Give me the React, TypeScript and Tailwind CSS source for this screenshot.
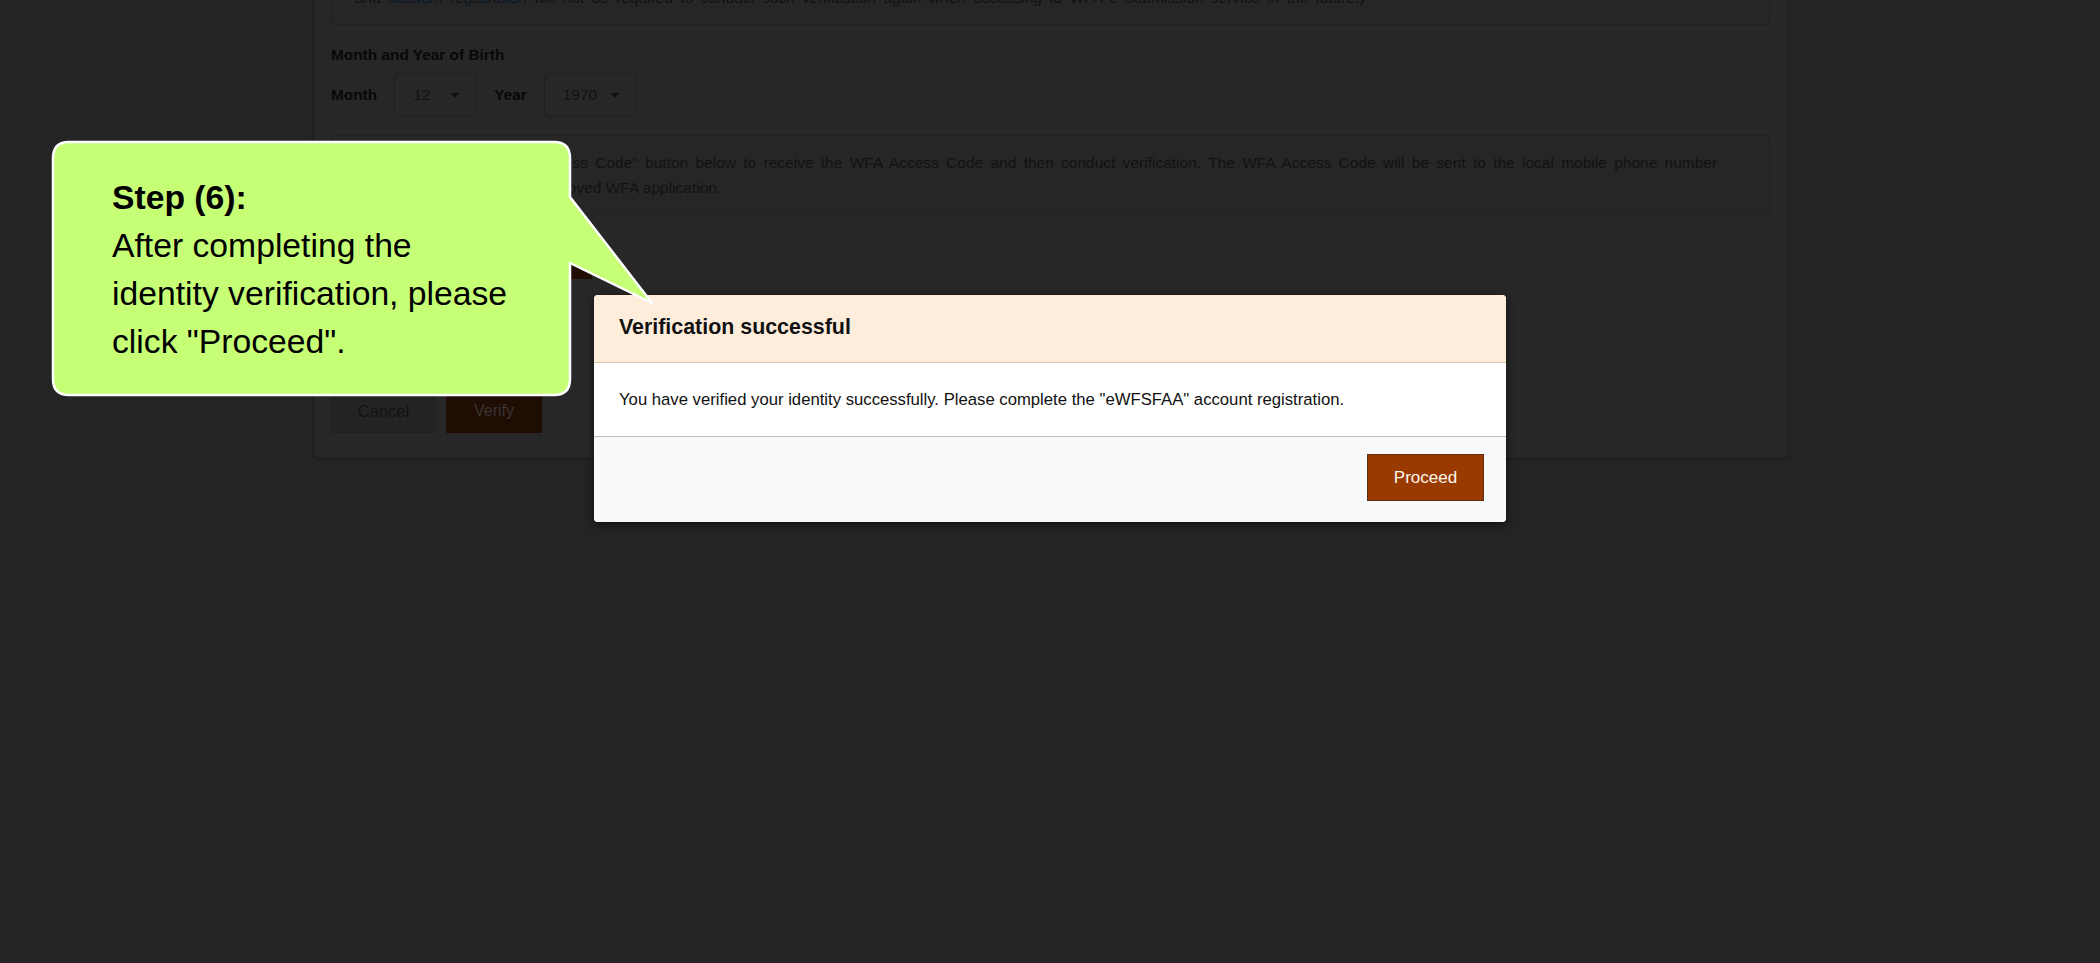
import React from "react";

function Caret() {
  return (
    <span className="inline-block h-0 w-0 border-x-[4px] border-t-[5px] border-x-transparent border-t-[#101010]" />
  );
}

function Select({ value, width }: { value: string; width: string }) {
  return (
    <div
      className={`${width} ml-[17px] flex h-[44px] items-center justify-between rounded-[4px] border border-[#1f1f1f] bg-[#272727] pl-[18px] pr-[17px] text-[15.5px] text-[#121212]`}
    >
      <span>{value}</span>
      <Caret />
    </div>
  );
}

export default function App() {
  return (
    <div className="relative h-[963px] w-[2100px] overflow-hidden bg-[#242424] font-['Liberation_Sans',Arial,sans-serif]">
      {/* dimmed page behind the dialog */}
      <div className="ml-[313px] mt-[-73px] w-[1475px] rounded-[4px] border border-[#212121] bg-[#272727] px-[17px] pb-[24px] pt-[17px] text-[15.5px] text-[#121212] shadow-[0_1px_3px_rgba(0,0,0,0.25)]">
        <div className="rounded-[4px] border border-[#1d2223] bg-[#262626] px-[23px] py-[14px] leading-[25px] [word-spacing:3px]">
          (Applicants who have completed the identity verification through this page and registered an "eWFSFAA" account before,
          <br />
          and <span className="text-[#0b1722]">account registration</span> will not be required to conduct such
          verification again when accessing to WFA e-Submission service in the future.)
        </div>

        <div className="mt-[19px] text-[15.4px] font-bold leading-[22px] text-[#080808]">
          Month and Year of Birth
        </div>
        <div className="mt-[7px] flex h-[44px] items-center">
          <span className="text-[15.4px] font-bold text-[#080808]">Month</span>
          <Select value="12" width="w-[83px]" />
          <span className="ml-[17px] text-[15.4px] font-bold text-[#080808]">Year</span>
          <Select value="1970" width="w-[93px]" />
        </div>

        <div className="mt-[18px] rounded-[4px] border border-[#1d2223] bg-[#262626] px-[23px] py-[14px] leading-[25px]">
          <span className="[word-spacing:0px]">Please click the "Get WFA Acce</span>
          <span className="[word-spacing:3px]">
            ss Code" button below to receive the WFA Access Code and then conduct verification. The WFA Access Code
            will be sent to the local mobile phone number
          </span>
          <br />
          which was provided in the approved WFA application.
        </div>

        <button className="mt-[20px] flex h-[44px] w-[261px] items-center justify-center bg-[#1f0d04] text-[16px] text-[#272727]">
          Get WFA Access Code
        </button>

        <div className="mt-[20px] flex h-[44px] items-center">
          <span className="text-[15.4px] font-bold text-[#080808]">WFA Access Code</span>
          <div className="ml-[17px] h-[44px] w-[80px] rounded-[4px] border border-[#1f1f1f] bg-[#272727]" />
        </div>

        <div className="mt-[46px] flex gap-[10px]">
          <button className="flex h-[44px] w-[105px] items-center justify-center border border-[#202020] bg-[#232323] text-[16.5px] text-[#121212]">
            Cancel
          </button>
          <button className="flex h-[44px] w-[96px] items-center justify-center bg-[#1f0d04] text-[16px] text-[#3a3532]">
            Verify
          </button>
        </div>
      </div>

      {/* modal */}
      <div className="absolute left-[594px] top-[295px] w-[912px] overflow-hidden rounded-[4px] bg-white shadow-[0_2px_10px_rgba(0,0,0,0.6)]">
        <div className="h-[68px] border-b border-[#d3c2ae] bg-[#ffeddc] px-[25px] pt-[19px] text-[21.4px] font-bold leading-[26px] text-[#111]">
          Verification successful
        </div>
        <div className="h-[74px] border-b border-[#bdbdbd] px-[25px] pt-[25px] text-[16.7px] leading-[24px] text-[#111]">
          You have verified your identity successfully. Please complete the "eWFSFAA" account registration.
        </div>
        <div className="flex h-[85px] justify-end bg-[#f7f9fb] pr-[22px] pt-[17px]">
          <button className="flex h-[47px] w-[117px] items-center justify-center border border-dotted border-[#222] bg-[#993a00] text-[17px] text-[#fff6ec]">
            Proceed
          </button>
        </div>
      </div>

      {/* callout */}
      <div className="absolute left-[53px] top-[142px] h-[253px] w-[517px] pl-[59px] pt-[31px] text-[33.7px] leading-[48px] text-black">
        <svg
          className="absolute left-[-2px] top-[-2px]"
          width="606"
          height="258"
          viewBox="0 0 606 258"
        >
          <g transform="translate(2,2)">
            <path
              d="M16,0 H501 Q517,0 517,16 V55 L599,161 L517,121 V237 Q517,253 501,253 H16 Q0,253 0,237 V16 Q0,0 16,0 Z"
              fill="#c6fe76"
              stroke="#ffffff"
              strokeWidth="2.5"
              strokeLinejoin="round"
            />
          </g>
        </svg>
        <div className="relative">
          <div className="font-bold">Step (6):</div>
          <div>After completing the</div>
          <div>identity verification, please</div>
          <div>click "Proceed".</div>
        </div>
      </div>
    </div>
  );
}
